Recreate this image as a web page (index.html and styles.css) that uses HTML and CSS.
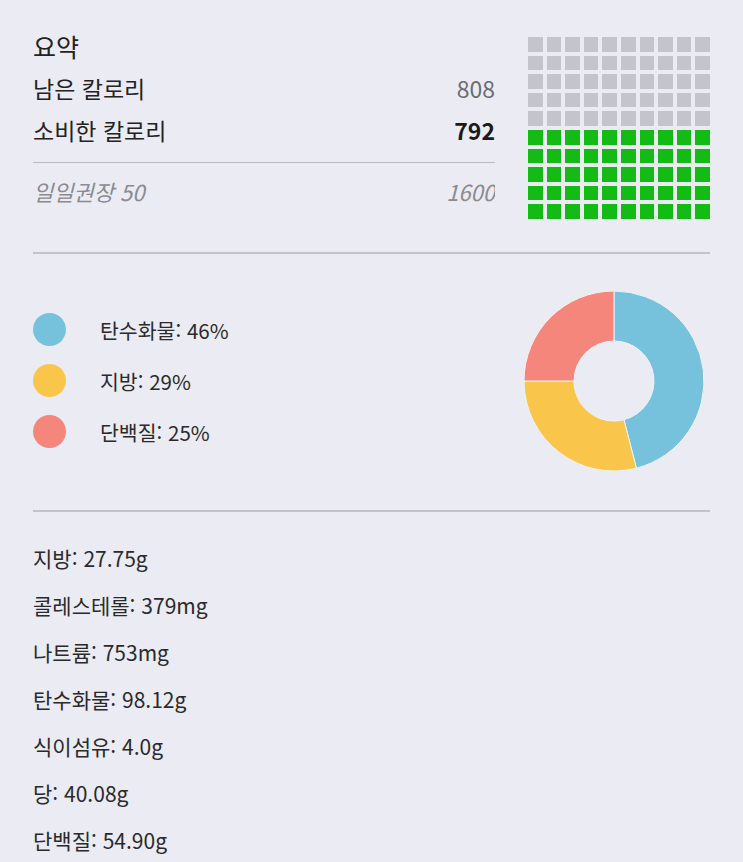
FILE: index.html
```html
<!DOCTYPE html>
<html lang="ko">
<head>
    <meta charset="UTF-8">
    <meta name="viewport" content="width=device-width, initial-scale=1.0">
    <title>요약</title>
    <link rel="stylesheet" href="styles.css">
</head>
<body>
    <div class="page">
        <section class="summary">
            <div class="summary-text">
                <div class="row title">요약</div>
                <div class="row">
                    <span>남은 칼로리</span>
                    <span class="remain">808</span>
                </div>
                <div class="row">
                    <span>소비한 칼로리</span>
                    <span class="used">792</span>
                </div>
                <div class="summary-line"></div>
                <div class="row goal">
                    <span>일일권장 50</span>
                    <span class="cut">1600</span>
                </div>
            </div>

            <div class="waffle">
                <span class="cell"></span><span class="cell"></span><span class="cell"></span><span class="cell"></span><span class="cell"></span><span class="cell"></span><span class="cell"></span><span class="cell"></span><span class="cell"></span><span class="cell"></span>
                <span class="cell"></span><span class="cell"></span><span class="cell"></span><span class="cell"></span><span class="cell"></span><span class="cell"></span><span class="cell"></span><span class="cell"></span><span class="cell"></span><span class="cell"></span>
                <span class="cell"></span><span class="cell"></span><span class="cell"></span><span class="cell"></span><span class="cell"></span><span class="cell"></span><span class="cell"></span><span class="cell"></span><span class="cell"></span><span class="cell"></span>
                <span class="cell"></span><span class="cell"></span><span class="cell"></span><span class="cell"></span><span class="cell"></span><span class="cell"></span><span class="cell"></span><span class="cell"></span><span class="cell"></span><span class="cell"></span>
                <span class="cell"></span><span class="cell"></span><span class="cell"></span><span class="cell"></span><span class="cell"></span><span class="cell"></span><span class="cell"></span><span class="cell"></span><span class="cell"></span><span class="cell"></span>
                <span class="cell on"></span><span class="cell on"></span><span class="cell on"></span><span class="cell on"></span><span class="cell on"></span><span class="cell on"></span><span class="cell on"></span><span class="cell on"></span><span class="cell on"></span><span class="cell on"></span>
                <span class="cell on"></span><span class="cell on"></span><span class="cell on"></span><span class="cell on"></span><span class="cell on"></span><span class="cell on"></span><span class="cell on"></span><span class="cell on"></span><span class="cell on"></span><span class="cell on"></span>
                <span class="cell on"></span><span class="cell on"></span><span class="cell on"></span><span class="cell on"></span><span class="cell on"></span><span class="cell on"></span><span class="cell on"></span><span class="cell on"></span><span class="cell on"></span><span class="cell on"></span>
                <span class="cell on"></span><span class="cell on"></span><span class="cell on"></span><span class="cell on"></span><span class="cell on"></span><span class="cell on"></span><span class="cell on"></span><span class="cell on"></span><span class="cell on"></span><span class="cell on"></span>
                <span class="cell on"></span><span class="cell on"></span><span class="cell on"></span><span class="cell on"></span><span class="cell on"></span><span class="cell on"></span><span class="cell on"></span><span class="cell on"></span><span class="cell on"></span><span class="cell on"></span>
            </div>
        </section>

        <section class="macros">
            <ul class="legend">
                <li><span class="dot carb"></span>탄수화물: 46%</li>
                <li><span class="dot fat"></span>지방: 29%</li>
                <li><span class="dot protein"></span>단백질: 25%</li>
            </ul>

            <svg class="donut" width="180" height="180" viewBox="0 0 180 180">
                <!-- 46% / 29% / 25%, clockwise from 12 o'clock -->
                <path fill="#76c2dc" d="M90 0 A90 90 0 0 1 112.38 177.17 L99.95 128.74 A40 40 0 0 0 90 50 Z"/>
                <path fill="#f9c64b" d="M112.38 177.17 A90 90 0 0 1 0 90 L50 90 A40 40 0 0 0 99.95 128.74 Z"/>
                <path fill="#f4867c" d="M0 90 A90 90 0 0 1 90 0 L90 50 A40 40 0 0 0 50 90 Z"/>
            </svg>
        </section>

        <ul class="nutrients">
            <li>지방: 27.75g</li>
            <li>콜레스테롤: 379mg</li>
            <li>나트륨: 753mg</li>
            <li>탄수화물: 98.12g</li>
            <li>식이섬유: 4.0g</li>
            <li>당: 40.08g</li>
            <li>단백질: 54.90g</li>
        </ul>
    </div>
</body>
</html>
```

FILE: styles.css
```css
body {
    margin: 0;
    padding: 0;
    background-color: #ebebf3;
    color: #222;
    font-family: "Noto Sans CJK KR", "Noto Sans", sans-serif;
}

.page {
    padding: 0 33px;
}

/* summary block */
.summary {
    display: flex;
    justify-content: space-between;
    align-items: flex-start;
    padding: 25px 0 33px;
    border-bottom: 2px solid #c3c3cb;
}

.summary-text {
    width: 462px;
}

.row {
    display: flex;
    justify-content: space-between;
    height: 42px;
    line-height: 42px;
    font-size: 23px;
    overflow: hidden;
}

.title {
    font-size: 25px;
}

.remain {
    color: #6c6c70;
}

.used {
    font-weight: bold;
    color: #1a1a1a;
}

.summary-line {
    height: 1px;
    margin-top: 11px;
    background-color: #b9b9c1;
}

.goal {
    margin-top: 7px;
    color: #8a8a90;
    font-style: italic;
    font-size: 22px;
}

.waffle {
    display: grid;
    grid-template-columns: repeat(10, 1fr);
    grid-auto-rows: 14.6px;
    gap: 4px;
    width: 182px;
    margin-top: 12px;
}

.cell {
    background-color: #c4c4cc;
}

.cell.on {
    background-color: #14bb14;
}

/* macro split */
.macros {
    display: flex;
    justify-content: space-between;
    align-items: center;
    padding: 37px 6px 39px 0;
    border-bottom: 2px solid #c3c3cb;
}

.legend {
    list-style: none;
    margin: 0;
    padding: 0;
}

.legend li {
    display: flex;
    align-items: center;
    gap: 34px;
    height: 51px;
    font-size: 20.5px;
    color: #2a2a2a;
}

.dot {
    width: 33px;
    height: 33px;
    border-radius: 50%;
}

.dot.carb {
    background-color: #76c2dc;
}

.dot.fat {
    background-color: #f9c64b;
}

.dot.protein {
    background-color: #f4867c;
}

.donut path {
    stroke: #f2f2f6;
    stroke-width: 1;
}

/* nutrient list */
.nutrients {
    list-style: none;
    margin: 0;
    padding: 23px 0 0;
}

.nutrients li {
    height: 47px;
    line-height: 47px;
    font-size: 21px;
    color: #2a2a2a;
}
```
